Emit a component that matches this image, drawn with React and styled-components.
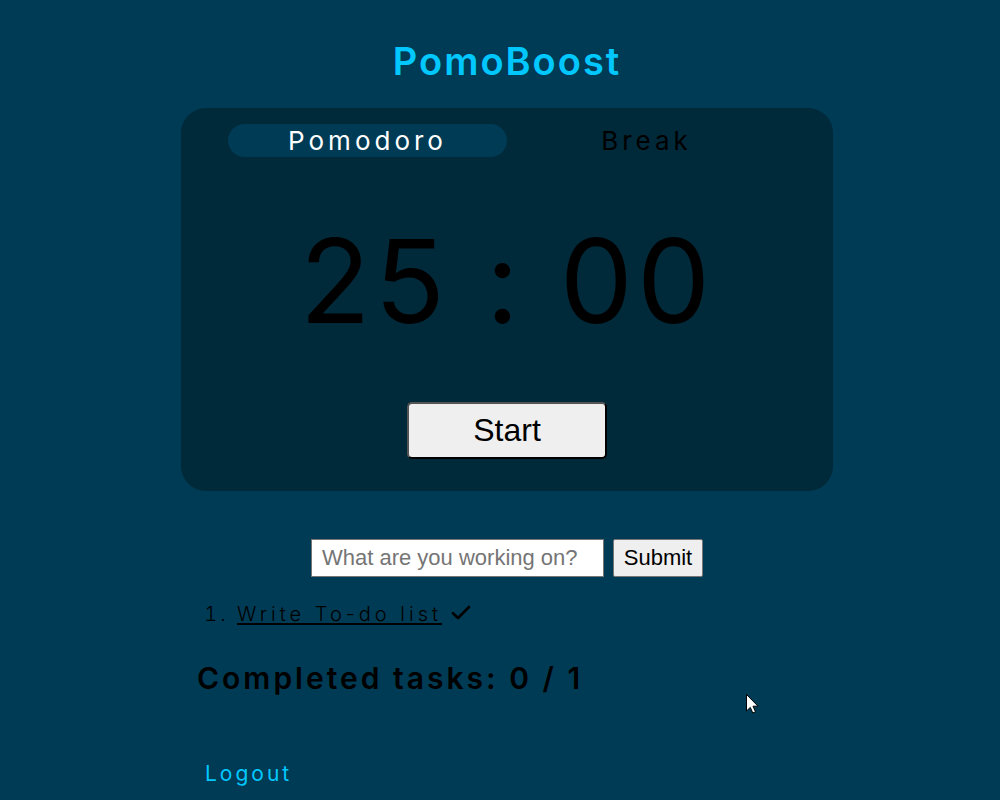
import React from "react";
import styled, { createGlobalStyle } from "styled-components";

const GlobalStyle = createGlobalStyle`
  * { box-sizing: border-box; }
  body {
    margin: 0;
    background: #003b55;
    color: #000;
    font-family: Inter, "Liberation Sans", sans-serif;
    letter-spacing: 3px;
  }
`;

const Page = styled.main`
  display: flex;
  flex-direction: column;
  align-items: center;
  min-height: 100vh;
  padding: 38px 0 0 14px;
`;

const Title = styled.h1`
  margin: 0 0 24px;
  color: #00c8ff;
  font-size: 38px;
  font-weight: 600;
  line-height: 46px;
  letter-spacing: 2px;
`;

const Column = styled.div`
  width: 90%;
  max-width: 652px;
`;

const TimerCard = styled.section`
  display: flex;
  flex-direction: column;
  align-items: center;
  padding: 16px 47px 32px;
  border-radius: 25px;
  background: #00293a;
`;

const Tabs = styled.div`
  display: grid;
  grid-template-columns: 1fr 1fr;
  width: 100%;
`;

const Tab = styled.button`
  height: 33px;
  padding: 0;
  border: 0;
  border-radius: 17px;
  background: ${(p) => (p.$active ? "#003b55" : "transparent")};
  color: ${(p) => (p.$active ? "#fff" : "#000")};
  font: 400 26px/33px Inter, "Liberation Sans", sans-serif;
  letter-spacing: 4px;
`;

const Clock = styled.div`
  margin: 54px 0 50px;
  font-size: 116px;
  line-height: 141px;
  letter-spacing: 4px;
  white-space: nowrap;
`;

const StartButton = styled.button`
  width: 200px;
  height: 57px;
  border: 2px outset #000;
  border-radius: 5px;
  background: #efefef;
  color: #000;
  font: 400 32px "Liberation Sans", Arial, sans-serif;
`;

const TaskForm = styled.form`
  display: flex;
  justify-content: center;
  gap: 9px;
  margin-top: 48px;
`;

const TaskInput = styled.input`
  width: 293px;
  height: 38px;
  padding: 0 10px;
  border: 1px solid #767676;
  background: #fff;
  font: 400 22px "Liberation Sans", Arial, sans-serif;
  &::placeholder { color: #757575; }
`;

const SubmitButton = styled.button`
  width: 90px;
  height: 38px;
  padding: 0;
  border: 1px solid #767676;
  border-radius: 2px;
  background: #efefef;
  color: #000;
  font: 400 22px "Liberation Sans", Arial, sans-serif;
`;

const TaskList = styled.ol`
  margin: 23px 0 0;
  padding-left: 56px;
  font-size: 20px;
  font-weight: 300;
  line-height: 28px;
`;

const TaskName = styled.span`
  letter-spacing: 4px;
  text-decoration: underline;
  text-decoration-thickness: 2px;
  text-underline-offset: 2px;
  text-decoration-skip-ink: none;
`;

const DoneButton = styled.button`
  margin-left: 8px;
  padding: 0;
  border: 0;
  background: none;
  color: #000;
  vertical-align: baseline;
  svg { display: block; }
`;

const Summary = styled.h2`
  margin: 32px 0 0;
  padding-left: 16px;
  font-size: 30px;
  font-weight: 600;
  line-height: 36px;
`;

const Logout = styled.a`
  display: block;
  width: fit-content;
  margin: 64px 0 0 24px;
  color: #00c8ff;
  font-size: 21px;
  line-height: 28px;
  text-decoration: none;
`;

const Pointer = styled.svg`
  position: absolute;
  left: 746px;
  top: 694px;
  pointer-events: none;
`;

export default function App() {
  return (
    <Page>
      <GlobalStyle />
      <Title>PomoBoost</Title>
      <Column>
        <TimerCard>
          <Tabs>
            <Tab type="button" $active>Pomodoro</Tab>
            <Tab type="button">Break</Tab>
          </Tabs>
          <Clock>25 : 00</Clock>
          <StartButton type="button">Start</StartButton>
        </TimerCard>
        <TaskForm onSubmit={(e) => e.preventDefault()}>
          <TaskInput aria-label="Task" placeholder="What are you working on?" />
          <SubmitButton type="submit">Submit</SubmitButton>
        </TaskForm>
        <TaskList>
          <li>
            <TaskName>Write To-do list</TaskName>
            <DoneButton type="button" aria-label="Complete task">
              <svg width="22" height="16" viewBox="0 0 22 16" fill="none" stroke="currentColor" strokeWidth="2.6" strokeLinecap="round" strokeLinejoin="round">
                <path d="M3 8.2 L8 13 L19 2" />
              </svg>
            </DoneButton>
          </li>
        </TaskList>
        <Summary>Completed tasks: 0 / 1</Summary>
        <Logout href="#logout">Logout</Logout>
      </Column>
      <Pointer width="13" height="21" viewBox="0 0 13 21" aria-hidden="true">
        <path d="M0.5 0.5 V17 L4.3 13.4 L6.8 19 L9.5 17.8 L7 12.2 H12 Z" fill="#fff" stroke="#000" />
      </Pointer>
    </Page>
  );
}
